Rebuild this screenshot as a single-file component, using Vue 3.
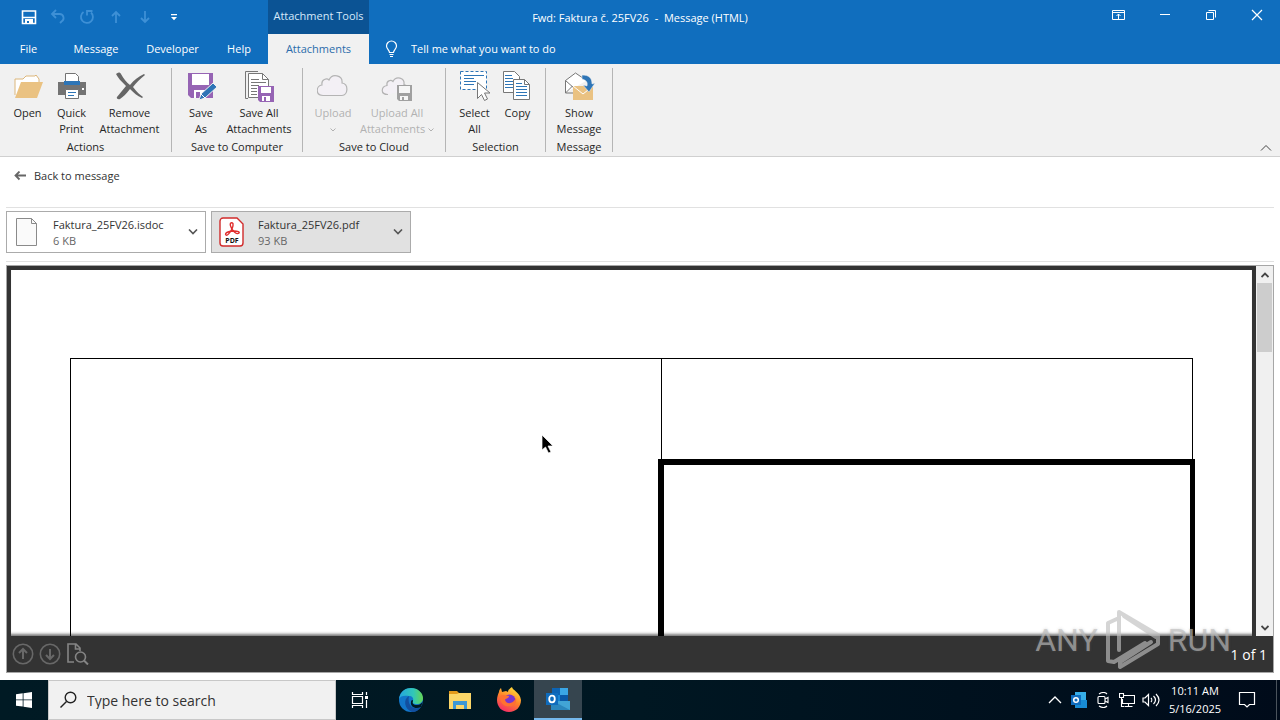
<script setup>
const tabs = [
  { label: 'File', cls: 'file' },
  { label: 'Message', cls: 'message' },
  { label: 'Developer', cls: 'developer' },
  { label: 'Help', cls: 'help' },
  { label: 'Attachments', cls: 'attachments active' },
]
const files = [
  { name: 'Faktura_25FV26.isdoc', size: '6 KB', type: 'blank' },
  { name: 'Faktura_25FV26.pdf', size: '93 KB', type: 'pdf' },
]
</script>

<template>
  <div class="desktop">
    <header class="titlebar">
      <div class="title-left">
        <div class="quick">
          <button aria-label="Save">
            <svg width="16" height="16" viewBox="0 0 16 16"><path d="M1.500 2h13v12.500h-13zM2 8.500h12" fill="none" stroke="#fff" stroke-width="1.600"/><path d="M4 14v-4h8v4" fill="#fff"/><path d="M6 12h2v2H6z" fill="#106ebe"/></svg>
          </button>
          <button class="dim" aria-label="Undo">
            <svg width="16" height="16" viewBox="0 0 16 16" fill="none" stroke="currentColor" stroke-width="1.800"><path d="M2 5h7.500a4 4 0 0 1 2 7.500L10 14M6 1 2 5l4 4"/></svg>
          </button>
          <button class="dim" aria-label="Redo">
            <svg width="16" height="16" viewBox="0 0 16 16" fill="none" stroke="currentColor" stroke-width="1.800"><path d="M4.500 3A6 6 0 1 0 12 3.500M8 6.500V2h5.500"/></svg>
          </button>
          <button class="dim" aria-label="Previous item">
            <svg width="16" height="16" viewBox="0 0 16 16" fill="none" stroke="currentColor" stroke-width="1.800"><path d="M8 14V3M4 7l4-4 4 4"/></svg>
          </button>
          <button class="dim" aria-label="Next item">
            <svg width="16" height="16" viewBox="0 0 16 16" fill="none" stroke="currentColor" stroke-width="1.800"><path d="M8 2v11M4 9l4 4 4-4"/></svg>
          </button>
          <button aria-label="Customize toolbar">
            <svg width="16" height="16" viewBox="0 0 16 16"><path d="M5 5h6v1.200H5zM5 8h6l-3 3.200z" fill="#fff"/></svg>
          </button>
        </div>
        <div class="context">Attachment Tools</div>
      </div>
      <div class="window-title">Fwd: Faktura č. 25FV26&nbsp; -&nbsp; Message (HTML)</div>
      <div class="window-buttons">
        <button aria-label="Ribbon display options">
          <svg width="14" height="12" viewBox="0 0 14 12" fill="none" stroke="#fff"><path d="M.5 1.500h12v9H.5zM.5 3.500h12M6.500 10V5M4.500 7l2-2 2 2"/></svg>
        </button>
        <button aria-label="Minimize">
          <svg width="12" height="12" viewBox="0 0 12 12" stroke="#fff"><path d="M1 5.500h10"/></svg>
        </button>
        <button aria-label="Restore">
          <svg width="12" height="12" viewBox="0 0 12 12" fill="none" stroke="#fff"><path d="M1.500 3.500h7v7h-7zM3.500 1.500h7v7"/></svg>
        </button>
        <button aria-label="Close">
          <svg width="12" height="12" viewBox="0 0 12 12" stroke="#fff" stroke-width="1.200"><path d="m1 1 10 10M11 1 1 11"/></svg>
        </button>
      </div>
    </header>

    <nav class="tabs">
      <button v-for="t in tabs" :key="t.label" :class="t.cls">{{ t.label }}</button>
      <label class="tell">
        <svg width="14" height="18" viewBox="0 0 14 18" fill="none" stroke="#fff" stroke-width="1.200"><path d="M4.500 12.500c0-2.500-3-3.500-3-6.500a5 5 0 0 1 10 0c0 3-3 4-3 6.500zM4.500 14.500h4M5 16.500h3"/></svg>
        <input type="text" aria-label="Tell me what you want to do" placeholder="Tell me what you want to do">
      </label>
    </nav>

    <section class="ribbon">
      <div class="group g-actions">
        <div class="tools">
          <button class="w44">
            <svg width="32" height="32" viewBox="0 0 32 32"><path d="M3 25V9h8l3-3h9l1-1 3 4v4" fill="#fff" stroke="#dcb67a"/><path d="M9 12h22l-6 16H3z" fill="#eac282"/></svg>
            <span>Open</span>
          </button>
          <button class="w44">
            <svg width="32" height="32" viewBox="0 0 32 32"><path d="M2 12h28v13H2z" fill="#737373"/><path d="M9.500 3.500h10l3 3V13h-13z" fill="#fff" stroke="#737373"/><path d="M8 11h16v4H8z" fill="#2e75b6"/><path d="M9.500 19.500h13v9h-13z" fill="#fff" stroke="#737373"/><path d="M12 22.500h8M12 25.500h6" stroke="#2e75b6"/><path d="M26 18h2v2h-2z" fill="#fff"/></svg>
            <span>Quick<br>Print</span>
          </button>
          <button class="w72">
            <svg width="32" height="32" viewBox="0 0 32 32"><path d="M2 4c2-2 4-2 5 0 3 5 5 8 9 11 4-5 8-8 14-11l1 1c-5 4-9 8-12 12 4 5 7 8 10 10l-1 1c-5-2-8-5-12-9-4 5-7 8-10 10-2 1-4-1-3-2 3-4 6-7 9-11C7 11 4 8 2 4z" fill="#666"/></svg>
            <span>Remove<br>Attachment</span>
          </button>
        </div>
        <h2>Actions</h2>
      </div>
      <div class="group g-computer">
        <div class="tools">
          <button class="w44">
            <svg width="32" height="32" viewBox="0 0 32 32"><path d="M3 3h25v25H6l-3-3z" fill="#9664b4"/><path d="M7 4h17v11H7zM9 20h12v8H9z" fill="#fff"/><path d="M11 22h4v6h-4z" fill="#9664b4"/><path d="m14 30 2-6 12-11 4 4-12 11z" fill="#2e75b6" stroke="#f1f1f1"/><path d="m16 24 4 4" stroke="#fff"/></svg>
            <span>Save<br>As</span>
          </button>
          <button class="w72">
            <svg width="32" height="32" viewBox="0 0 32 32"><path d="M5 28.500H2.500v-27H15" fill="none" stroke="#777"/><path d="M5.500 3.500h14l6 6v18h-20z" fill="#fff" stroke="#777"/><path d="M19.500 3.500v6h6M8 9.500h8M8 12.500h15M8 15.500h8M8 18.500h6M8 21.500h6M8 24.500h6" fill="none" stroke="#777"/><path d="M15 16h16v16H17l-2-2z" fill="#9664b4"/><path d="M18 17h10v6H18zM19 26h8v5h-8z" fill="#fff"/><path d="M21 27h2v4h-2z" fill="#9664b4"/></svg>
            <span>Save All<br>Attachments</span>
          </button>
        </div>
        <h2>Save to Computer</h2>
      </div>
      <div class="group g-cloud">
        <div class="tools">
          <button class="w46" disabled>
            <svg width="32" height="32" viewBox="0 0 32 32"><path d="M6 25.500c-8 0-7-10-1-10.500-1-6 5-7 7-5 3-7 14-5 13 3 7 1 6 12.500 0 12.500z" fill="#f3f0f5" stroke="#b4b4b4" stroke-width="1.200"/></svg>
            <span>Upload<br><svg width="6" height="4" viewBox="0 0 6 4"><path d="m.5.5 2.500 2.500L5.500.5" fill="none" stroke="currentColor"/></svg></span>
          </button>
          <button class="w82" disabled>
            <svg width="32" height="32" viewBox="0 0 32 32"><path d="M7 24.500c-8 0-7-8-1-9-1-5 4-6 6-4 3-6 12-4 11 3 5 1 4 5 4 5" fill="#f3f0f5" stroke="#b4b4b4" stroke-width="1.200"/><path d="M16 15h15v16H18l-2-2z" fill="#a0a0a0"/><path d="M18 16h11v7H18zM19 26h8v4h-8z" fill="#f6f6f6"/><path d="M21 27h2v3h-2z" fill="#a0a0a0"/></svg>
            <span>Upload All<br>Attachments <svg width="6" height="4" viewBox="0 0 6 4"><path d="m.5.5 2.500 2.500L5.500.5" fill="none" stroke="currentColor"/></svg></span>
          </button>
        </div>
        <h2>Save to Cloud</h2>
      </div>
      <div class="group g-selection">
        <div class="tools">
          <button class="w44">
            <svg width="32" height="32" viewBox="0 0 32 32"><path d="M1.500 1.500h26v18h-26z" fill="#fff" stroke="#2e75b6" stroke-dasharray="3 2"/><path d="M5 5.500h20M5 8.500h10M5 11.500h12M5 14.500h10" stroke="#2e75b6"/><path d="M18.500 12.500v16l4-4 3 6 3-1.500-3-6h5.500z" fill="#fff" stroke="#777"/></svg>
            <span>Select<br>All</span>
          </button>
          <button class="w42">
            <svg width="32" height="32" viewBox="0 0 32 32"><path d="M1.500 1.500h11l5 5v16h-16z" fill="#fff" stroke="#777"/><path d="M3 5.500h7M3 8.500h8M3 11.500h8M3 14.500h8M3 17.500h8" stroke="#2e75b6"/><path d="M11.500 9.500h11l5 5v15h-16z" fill="#fff" stroke="#777"/><path d="M22.500 9.500v5h5" fill="none" stroke="#777"/><path d="M14 13.500h6M14 16.500h11M14 19.500h11M14 22.500h11M14 25.500h11" stroke="#2e75b6"/></svg>
            <span>Copy</span>
          </button>
        </div>
        <h2>Selection</h2>
      </div>
      <div class="group g-message">
        <div class="tools">
          <button class="w66">
            <svg width="32" height="32" viewBox="0 0 32 32"><path d="M2.500 23V10.500L12.500 3l11 7.500M2.500 23h9M2.500 23l7-7M2.500 10.500l9 8" fill="#fff" stroke="#777"/><path d="M10 16h20v14H10z" fill="#eac282"/><path d="m10 16 10 8 10-8" fill="none" stroke="#fff"/><path d="M19 5c7 0 10 3 10 9l3-1-6 9-6-7 4 1c1-4-1-6-5-7z" fill="#2e75b6" stroke="#f1f1f1" stroke-width=".5"/></svg>
            <span>Show<br>Message</span>
          </button>
        </div>
        <h2>Message</h2>
      </div>
      <button class="collapse" aria-label="Collapse the ribbon">
        <svg width="12" height="8" viewBox="0 0 12 8"><path d="m1 6.500 5-5 5 5" fill="none" stroke="#444"/></svg>
      </button>
    </section>

    <main>
      <div class="back-row">
        <button class="back">
          <svg width="12" height="10" viewBox="0 0 12 10" fill="none" stroke="#666" stroke-width="1.800"><path d="M12 4.500H1.500M5.500.5l-4 4 4 4"/></svg>
          Back to message
        </button>
      </div>
      <div class="files">
        <button v-for="f in files" :key="f.name" class="file-card" :class="{ selected: f.type === 'pdf' }">
          <svg v-if="f.type === 'blank'" width="26" height="30" viewBox="0 0 26 30"><path d="M2.500 1.500h15l5 5v22h-20z" fill="#fafafa" stroke="#8a8a8a"/><path d="M17.500 1.500v5h5" fill="none" stroke="#8a8a8a"/></svg>
          <svg v-else width="26" height="30" viewBox="0 0 26 30"><path d="M4 1h14l6 6v19a3 3 0 0 1-3 3H4a3 3 0 0 1-3-3V4a3 3 0 0 1 3-3z" fill="#fff" stroke="#d12b2b" stroke-width="1.400"/><path d="M12 6c2-1 3 1 1 6-2 4-5 7-6 6-2-2 3-4 8-4 4 0 6 1 5 2-2 2-7-2-8-6-1-2-1-4 0-4z" fill="none" stroke="#e02d2d" stroke-width="1.400"/><text x="13" y="26" text-anchor="middle" class="pdf-label">PDF</text></svg>
          <span class="file-text"><span class="file-name">{{ f.name }}</span><span class="file-size">{{ f.size }}</span></span>
          <svg width="10" height="6" viewBox="0 0 10 6"><path d="m1 .5 4 4 4-4" fill="none" stroke="#555" stroke-width="1.600"/></svg>
        </button>
      </div>

      <div class="viewer">
        <div class="view-area">
          <div class="page">
            <div class="invoice">
              <div class="cell-left"></div>
              <div class="cell-right">
                <div class="cell-top"></div>
                <div class="cell-bold"></div>
              </div>
            </div>
          </div>
          <div class="scrollbar">
            <button aria-label="Scroll up"><svg width="8" height="6" viewBox="0 0 8 6"><path d="m.5 5 3.500-3.500L7.500 5" fill="none" stroke="#444" stroke-width="1.800"/></svg></button>
            <div class="track"><div class="thumb"></div></div>
            <button aria-label="Scroll down"><svg width="8" height="6" viewBox="0 0 8 6"><path d="m.5 1 3.500 3.500L7.500 1" fill="none" stroke="#444" stroke-width="1.800"/></svg></button>
          </div>
        </div>
        <div class="page-bar">
          <button aria-label="Previous page"><svg width="22" height="22" viewBox="0 0 22 22" fill="none" stroke="#686868" stroke-width="1.600"><circle cx="11" cy="11" r="9.700"/><path d="M11 16V6M7 10l4-4 4 4" stroke-width="2"/></svg></button>
          <button aria-label="Next page"><svg width="22" height="22" viewBox="0 0 22 22" fill="none" stroke="#686868" stroke-width="1.600"><circle cx="11" cy="11" r="9.700"/><path d="M11 6v10M7 12l4 4 4-4" stroke-width="2"/></svg></button>
          <button aria-label="Find in document"><svg width="23" height="22" viewBox="0 0 23 22" fill="none" stroke="#858585" stroke-width="1.600"><path d="M8 19H2V1h8l4 4v3M9.500 1v5H14"/><circle cx="14.500" cy="14" r="5"/><path d="m18 17.500 4 4" stroke-width="2"/></svg></button>
          <span class="page-count">1 of 1</span>
        </div>
        <div class="watermark">
          <span>ANY</span>
          <svg width="56" height="64" viewBox="0 0 56 64" fill="none" stroke="currentColor" stroke-width="4" stroke-linejoin="round" stroke-linecap="round"><path d="M14 42V4l39 23v9L15 59v-5l31-20M14 10 3 15v38l6 1 31-19M19 8l32 21"/></svg>
          <span>RUN</span>
        </div>
      </div>
    </main>

    <footer class="taskbar">
      <button class="task" aria-label="Start"><svg width="16" height="16" viewBox="0 0 16 16"><path d="M0 2.300 6.700 1.300v6.200H0zM7.500 1.200 16 0v7.500H7.500zM0 8.300h6.700v6.300L0 13.700zM7.500 8.300H16V16l-8.500-1.200z" fill="#fff"/></svg></button>
      <label class="search">
        <svg width="18" height="18" viewBox="0 0 18 18" fill="none" stroke="#222" stroke-width="1.400"><circle cx="10.500" cy="6.500" r="5.300"/><path d="m6.500 10.500-6 6"/></svg>
        <input type="text" aria-label="Type here to search" placeholder="Type here to search">
      </label>
      <button class="task" aria-label="Task view"><svg width="18" height="18" viewBox="0 0 18 18" fill="none" stroke="#fff" stroke-width="1.200"><path d="M1.500 5.500h10v7h-10zM1.500 1v2.500h10V1M1.500 17v-2.500h10V17M15.500 1v3M15.500 9v8"/><path d="M14 5h3v3h-3z" fill="#fff" stroke="none"/></svg></button>
      <div class="apps">
        <button class="task" aria-label="Edge">
          <svg width="26" height="26" viewBox="0 0 26 26"><defs><linearGradient id="edge-top" x1="0" x2="1"><stop offset="0" stop-color="#24a5df"/><stop offset=".6" stop-color="#31c7b8"/><stop offset="1" stop-color="#66d552"/></linearGradient></defs><circle cx="13" cy="13" r="12" fill="#1276ca"/><path d="M1 12C2 4 8 1 13 1c7 0 12 5 12 10 0 4-3 6-6 6-4 0-5-1-4-3 1-3-1-5-4-5-5-1-9 0-10 3z" fill="url(#edge-top)"/><path d="M11 9c-6 3-5 13 3 16 4 0 7-2 9-5-8 4-14-2-12-11z" fill="#124f9f"/><path d="M15 14c-1 2 0 4 4 4 3 0 5-2 6-4l-2 6c-6 3-11-1-10-5 0-2 2-3 2-1z" fill="#001923"/></svg>
        </button>
        <button class="task" aria-label="File Explorer">
          <svg width="24" height="22" viewBox="0 0 24 22"><path d="M1 2h8l2 2h12v4H1z" fill="#e39a1b"/><path d="M1 5h8l2-1h12v16H1z" fill="#fbd668"/><path d="M5 12h14v8h-3v-4H8v4H5z" fill="#3d98d3"/></svg>
        </button>
        <button class="task" aria-label="Firefox">
          <svg width="26" height="26" viewBox="0 0 26 26"><defs><linearGradient id="fox" x1=".8" y1="0" x2=".3" y2="1"><stop offset="0" stop-color="#ffe63b"/><stop offset=".5" stop-color="#ff8429"/><stop offset="1" stop-color="#f52b68"/></linearGradient></defs><path d="M3 5c0-2 1-3 2-4l1 4 4-1 2 1c0-2 2-4 4-5 0 3 8 5 9 13 0 7-5 12-12 12S1 20 1 13c0-3 1-6 2-8z" fill="url(#fox)"/><circle cx="13.500" cy="13.500" r="6" fill="#7a35cf"/><path d="M4 9c4-2 6 0 9 0 0 3-4 2-4 4 2 5 8 4 11-2 1 8-5 10-10 8-4-1-6-5-6-10z" fill="#ff7131"/></svg>
        </button>
        <button class="task current" aria-label="Outlook">
          <svg width="26" height="24" viewBox="0 0 26 24"><path d="M7 1h16v14H7z" fill="#1784d4"/><path d="M7 1h8v7H7z" fill="#0c64b5"/><path d="M15 1h8v7h-8z" fill="#3aa6e6"/><path d="M15 8h8v7h-8z" fill="#0a58a8"/><path d="M6 14h19v9H6z" fill="#42a4d6"/><path d="m6 13 19 10H6z" fill="#2b86bd"/><path d="M1 6h12v12H1z" fill="#0f6cbd"/><ellipse cx="7" cy="12" rx="2.800" ry="3.300" fill="none" stroke="#fff" stroke-width="1.800"/></svg>
        </button>
      </div>
      <div class="tray">
        <button aria-label="Show hidden icons"><svg width="14" height="8" viewBox="0 0 14 8" fill="none" stroke="#fff" stroke-width="1.300"><path d="m1 7 6-6 6 6"/></svg></button>
        <button aria-label="Outlook notification"><svg width="16" height="16" viewBox="0 0 16 16"><path d="M4 0h11v10H4z" fill="#36aee8"/><path d="M4 8h12v8H4z" fill="#188bd3"/><path d="M0 3h10v10H0z" fill="#0f6cbd"/><circle cx="5" cy="8" r="2.300" fill="none" stroke="#fff" stroke-width="1.500"/></svg></button>
        <button aria-label="Camera"><svg width="14" height="16" viewBox="0 0 14 16" fill="none" stroke="#fff" stroke-width="1.100"><rect x="2" y="4.500" width="7" height="7" rx="1"/><path d="m9 7 3-1.500v5L9 9M3 2c3-2 6-2 8 0M3 14c3 2 6 2 8 0"/></svg></button>
        <button aria-label="Network"><svg width="16" height="16" viewBox="0 0 16 16" fill="none" stroke="#fff" stroke-width="1.100"><path d="M5 3.500h10.500v8H3.500V7M9.500 11.500v3M5.500 14.500h8M.5 1.500h4v4h-4zM2.500 5.500v9H5"/></svg></button>
        <button aria-label="Volume"><svg width="18" height="14" viewBox="0 0 18 14" fill="none" stroke="#fff" stroke-width="1.200"><path d="M1 5h2l3.500-3.500v11L3 9H1zM9 5c1 1 1 3 0 4M11.500 3c2.500 2.500 2.500 5.500 0 8M14 1c4 4 4 8 0 12"/></svg></button>
      </div>
      <div class="clock"><span>10:11 AM</span><span>5/16/2025</span></div>
      <button class="notify" aria-label="Notifications"><svg width="18" height="18" viewBox="0 0 18 18" fill="none" stroke="#fff" stroke-width="1.200"><path d="M1.500 1.500h15v12h-5L9 16l-2.500-2.500h-5z"/></svg></button>
      <div class="show-desktop"></div>
    </footer>

    <svg class="pointer" width="14" height="20" viewBox="0 0 14 20"><path d="M1 1v15l3.500-3 3 6 2.500-1-3-6h5z" fill="#000" stroke="#fff" stroke-width=".7"/></svg>
  </div>
</template>

<style>
body { margin: 0; }
</style>

<style scoped>
.desktop {
  position: relative;
  display: flex;
  flex-direction: column;
  height: 100vh;
  overflow: hidden;
  background: #fff;
  color: #333;
  font: 11px/16px "Open Sans", "Noto Sans", sans-serif;
}
.desktop * { box-sizing: border-box; }
button { margin: 0; padding: 0; border: 0; background: none; color: inherit; font: inherit; }
input { min-width: 0; padding: 0; border: 0; outline: 0; background: none; color: inherit; font: inherit; }
svg { flex: none; }

.titlebar {
  display: grid;
  grid-template-columns: 1fr auto 1fr;
  height: 34px;
  flex: none;
  background: #106ebe;
  color: #fff;
}
.title-left { display: flex; justify-content: space-between; max-width: 369px; }
.quick { display: flex; align-items: center; padding-left: 14px; }
.quick button { width: 29px; height: 30px; display: grid; place-items: center; }
.dim { color: #3e90d6; }
.context { width: 101px; padding-top: 8px; text-align: center; background: #0b5394; color: #d5e9fa; }
.window-title { padding-top: 10px; }
.window-buttons { display: flex; justify-content: flex-end; }
.window-buttons button { width: 46px; height: 30px; display: grid; place-items: center; }

.tabs { display: flex; height: 30px; flex: none; background: #106ebe; color: #fff; }
.file { width: 57px; }
.message { width: 78px; }
.developer { width: 75px; }
.help { width: 58px; }
.attachments { width: 101px; }
.active { background: #f1f1f1; color: #2b6cab; }
.tell { display: flex; align-items: center; flex: 1; gap: 12px; padding-left: 16px; }
.tell input { flex: 1; }
.tell input::placeholder { color: #fff; opacity: 1; }

.ribbon { display: flex; flex: none; height: 93px; padding: 4px 0; background: #f1f1f1; border-bottom: 1px solid #d0d0d0; color: #262626; }
.group { display: flex; flex-direction: column; border-right: 1px solid #b5b5b5; }
.tools { display: flex; justify-content: center; height: 72px; }
.tools button { display: flex; flex-direction: column; align-items: center; padding-top: 2px; white-space: nowrap; }
.tools button > span { padding-top: 3px; }
.tools button:disabled { color: #b1b1b1; }
.tools span svg { vertical-align: middle; }
h2 { margin: 0; font: inherit; line-height: 20px; text-align: center; }
.g-actions { width: 172px; }
.g-computer { width: 131px; }
.g-cloud { width: 143px; }
.g-selection { width: 100px; }
.g-message { width: 67px; }
.w42 { width: 42px; }
.w44 { width: 44px; }
.w46 { width: 46px; }
.w66 { width: 66px; }
.w72 { width: 72px; }
.w82 { width: 82px; }
.collapse { display: flex; align-items: flex-end; margin-left: auto; padding-right: 8px; }

main { display: flex; flex: 1; flex-direction: column; min-height: 0; padding: 0 6px 7px; }
.back-row { height: 51px; padding: 11px 8px; border-bottom: 1px solid #e1e1e1; }
.back { display: flex; align-items: center; gap: 8px; }
.files { display: flex; gap: 5px; height: 54px; padding-top: 3px; border-bottom: 1px solid #e1e1e1; }
.file-card { display: flex; align-items: center; width: 200px; height: 42px; padding: 0 7px; border: 1px solid #ababab; background: #fff; text-align: left; }
.file-card.selected { background: #e1e1e1; }
.file-text { display: flex; flex: 1; flex-direction: column; padding: 2px 0 0 13px; }
.file-size { color: #666; }
.pdf-label { font: bold 7px "Open Sans", sans-serif; fill: #111; }

.viewer { position: relative; display: flex; flex: 1; flex-direction: column; min-height: 0; margin-top: 3px; border: 1px solid #a6a6a6; background: #333; }
.view-area { display: flex; flex: 1; min-height: 0; padding-left: 4px; gap: 4px; }
.page { flex: 1; margin-top: 4px; padding: 88px 59px 0; background: #fff; box-shadow: inset 0 -4px 3px -2px #777; overflow: hidden; }
.invoice { display: grid; grid-template-columns: 591fr 532fr; height: 100%; border-top: 1px solid #000; }
.cell-left { border-left: 1px solid #000; }
.cell-right { display: flex; flex-direction: column; }
.cell-top { height: 100px; border: solid #000; border-width: 0 1px; }
.cell-bold { flex: 1; margin: 0 -2px 0 -3px; border: solid #000; border-width: 6px 5px 0 6px; }
.scrollbar { display: flex; flex-direction: column; width: 17px; background: #f0f0f0; }
.scrollbar button { height: 17px; display: grid; place-items: center; }
.track { flex: 1; padding: 0 1px; }
.thumb { height: 69px; background: #cdcdcd; }
.page-bar { display: flex; align-items: center; height: 36px; padding: 0 6px 0 5px; gap: 5px; color: #fff; }
.page-bar button { display: grid; }
.page-count { margin-left: auto; padding-top: 2px; font-size: 14px; }
.watermark { position: absolute; right: 42px; bottom: 0; display: flex; align-items: center; gap: 7px; color: rgba(190, 190, 190, .65); font: 32px/64px Roboto, sans-serif; text-shadow: 0 0 3px rgba(120, 120, 120, .3); pointer-events: none; }

.taskbar { display: flex; flex: none; height: 40px; background: linear-gradient(90deg, #001a24, #001722 50%, #000b1a); color: #fff; }
.task { display: grid; place-items: center; width: 48px; height: 40px; }
.search { display: flex; align-items: center; gap: 9px; width: 288px; padding: 0 11px; border: 1px solid #c8c8c8; background: #f1f1f1; color: #333; font-size: 14px; }
.search input { flex: 1; padding-top: 2px; }
.search input::placeholder { color: #333; opacity: 1; }
.apps { display: flex; gap: 1px; padding-left: 3px; }
.current { background: #36454f; border-bottom: 2px solid #76b9ed; }
.tray { display: flex; margin-left: auto; }
.tray button { display: grid; place-items: center; width: 24px; }
.clock { display: flex; flex-direction: column; width: 64px; padding-top: 2px; text-align: center; font-size: 11px; line-height: 18px; }
.notify { display: grid; place-items: center; width: 40px; margin-right: 9px; }
.show-desktop { width: 4px; border-left: 1px solid #4a535c; }
.pointer { position: absolute; left: 541px; top: 434px; }
</style>
